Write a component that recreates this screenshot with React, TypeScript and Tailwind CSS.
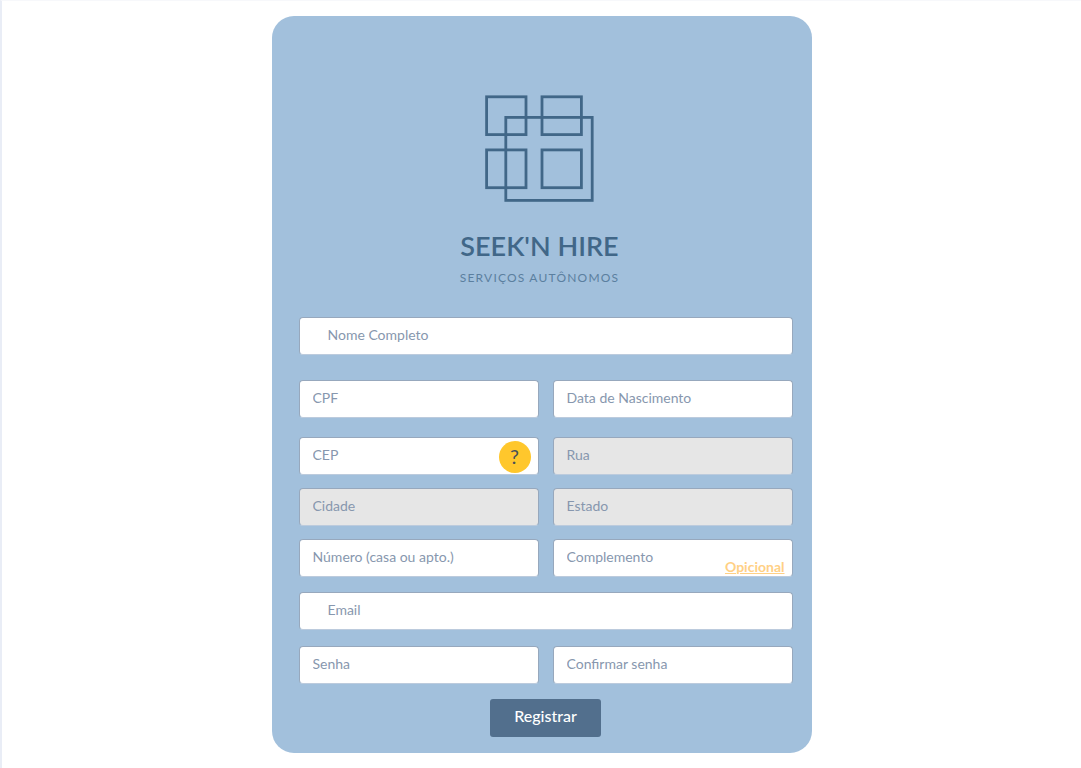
import type { InputHTMLAttributes } from "react";

type FieldProps = InputHTMLAttributes<HTMLInputElement> & { label: string; wide?: boolean };

function Field({ label, wide = false, ...rest }: FieldProps) {
  return (
    <input
      aria-label={label}
      placeholder={label}
      className={
        (wide ? "pl-7 " : "pl-[13px] ") +
        "block h-[38px] w-full min-w-0 rounded border border-[#97a8bd] border-b-[#bccbdd] bg-white pr-3 pb-1 text-sm text-[#4a5f7d] placeholder:text-[#8797ae] disabled:bg-[#e6e6e6]"
      }
      {...rest}
    />
  );
}

function LogoMark() {
  return (
    <svg
      viewBox="0 0 110 108"
      className="h-[108px] w-[110px]"
      fill="none"
      stroke="#416788"
      strokeWidth="2.8"
      aria-hidden="true"
    >
      <rect x="1.6" y="2.8" width="39.4" height="37.8" />
      <rect x="57" y="2.8" width="39.4" height="37.8" />
      <rect x="1.6" y="55.9" width="39.4" height="37.8" />
      <rect x="57" y="55.9" width="39.4" height="37.8" />
      <rect x="20.8" y="23.4" width="86.4" height="83" />
    </svg>
  );
}

export default function App() {
  return (
    <main className="min-h-screen border-t border-l-2 border-t-[#f7f8fb] border-l-[#e9edf6] bg-white pt-[15px] pb-[15px] font-['Lato',sans-serif]">
      <form
        className="mx-auto w-full max-w-[540px] rounded-[22px] bg-[#a2c0dc] pt-[78px] pr-[19px] pb-4 pl-[27px]"
        onSubmit={(event) => event.preventDefault()}
      >
        <header className="flex flex-col items-center pr-3 text-[#416788]">
          <LogoMark />
          <h1 className="mt-7 text-[27px] leading-8 font-semibold whitespace-nowrap">SEEK&apos;N HIRE</h1>
          <p className="mt-2 text-xs leading-4 tracking-widest whitespace-nowrap text-[#5b7f9f]">
            SERVIÇOS AUTÔNOMOS
          </p>
        </header>

        <div className="mt-[31px]">
          <Field label="Nome Completo" name="nome" wide />
        </div>

        <div className="mt-[25px] grid grid-cols-2 gap-x-3.5">
          <Field label="CPF" name="cpf" />
          <Field label="Data de Nascimento" name="nascimento" />
        </div>

        <div className="mt-[19px] grid grid-cols-2 gap-x-3.5 gap-y-[13px]">
          <div className="relative">
            <Field label="CEP" name="cep" />
            <button
              type="button"
              aria-label="Ajuda com o CEP"
              className="absolute top-1 right-2 flex size-8 items-center justify-center rounded-full bg-[#ffc72c] pb-0.5 text-xl text-[#45505a]"
            >
              ?
            </button>
          </div>
          <Field label="Rua" name="rua" disabled />
          <Field label="Cidade" name="cidade" disabled />
          <Field label="Estado" name="estado" disabled />
          <Field label="Número (casa ou apto.)" name="numero" />
          <div className="relative">
            <Field label="Complemento" name="complemento" />
            <span className="absolute right-2 bottom-0 text-sm font-bold text-[#ffd085] underline">
              Opicional
            </span>
          </div>
        </div>

        <div className="mt-[15px]">
          <Field label="Email" name="email" type="email" wide />
        </div>

        <div className="mt-4 grid grid-cols-2 gap-x-3.5">
          <Field label="Senha" name="senha" type="password" />
          <Field label="Confirmar senha" name="confirmar" type="password" />
        </div>

        <div className="mt-[15px] flex justify-center">
          <button
            type="submit"
            className="h-[38px] rounded-[3px] bg-[#526f8d] px-6 pb-1 text-base font-medium text-white"
          >
            Registrar
          </button>
        </div>
      </form>
    </main>
  );
}
